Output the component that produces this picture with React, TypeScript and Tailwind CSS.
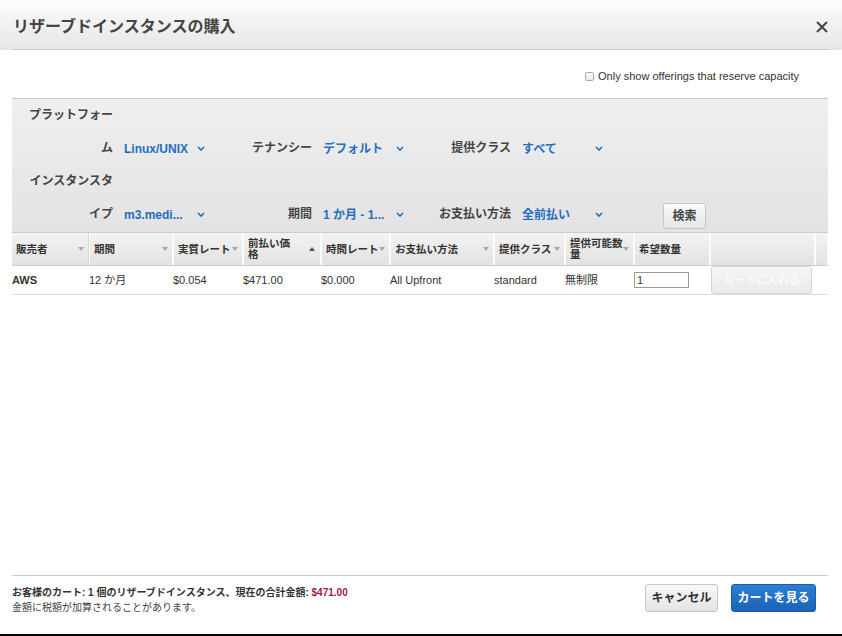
import React from "react";

function SortDown() {
  return (
    <svg width="6" height="4" viewBox="0 0 6 4" className="absolute right-[4px] top-1/2 -translate-y-1/2">
      <path d="M0 0 L6 0 L3 4 Z" fill="#a8a8a8" />
    </svg>
  );
}
function SortUp() {
  return (
    <svg width="6" height="4" viewBox="0 0 6 4" className="absolute right-[5px] top-1/2 -translate-y-1/2">
      <path d="M0 4 L6 4 L3 0 Z" fill="#555" />
    </svg>
  );
}
function Chevron() {
  return (
    <svg width="8" height="5" viewBox="0 0 8 5" className="shrink-0">
      <path d="M1 1 L4 4 L7 1" fill="none" stroke="#1e6ebf" strokeWidth="1.6" />
    </svg>
  );
}

function Filter({ label, value }: { label: React.ReactNode; value: string }) {
  return (
    <div className="flex items-end">
      <div className="w-[85px] text-right leading-[33px] font-bold text-[#444] text-[12px] whitespace-nowrap">{label}</div>
      <div className="ml-[11px] w-[81px] h-[33px] flex items-center justify-between">
        <span className="text-[12px] font-bold text-[#1e6ebf] whitespace-nowrap">{value}</span>
        <Chevron />
      </div>
    </div>
  );
}

const cols: { w: string; label: React.ReactNode; sort: string }[] = [
  { w: "w-[77px]", label: "販売者", sort: "down" },
  { w: "w-[84px]", label: "期間", sort: "down" },
  { w: "w-[70px]", label: "実質レート", sort: "down" },
  { w: "w-[78px]", label: <>前払い価<br />格</>, sort: "up" },
  { w: "w-[69px]", label: "時間レート", sort: "down" },
  { w: "w-[104px]", label: "お支払い方法", sort: "down" },
  { w: "w-[71px]", label: "提供クラス", sort: "down" },
  { w: "w-[69px]", label: <>提供可能数<br />量</>, sort: "down" },
  { w: "w-[76px]", label: "希望数量", sort: "none" },
  { w: "w-[105px]", label: "", sort: "none" },
  { w: "w-[13px]", label: "", sort: "none" },
];

export default function App() {
  return (
    <div className="w-[842px] h-[636px] bg-white flex flex-col border-b-2 border-black font-['Liberation_Sans','Noto_Sans_CJK_JP',sans-serif] text-[#333] overflow-hidden">
      {/* Header */}
      <div className="h-[50px] shrink-0 bg-gradient-to-b from-[#fcfcfc] to-[#e6e6e6]">
        <div className="ml-[12px] mr-[13px] h-full border-b border-[#c8c8c8] flex items-center justify-between pt-[5px]">
          <div className="text-[16px] font-bold text-[#444] leading-none pl-[1px]">リザーブドインスタンスの購入</div>
          <svg width="12" height="12" viewBox="0 0 12 12" className="mr-[1px]">
            <path d="M1 1 L11 11 M11 1 L1 11" stroke="#444" strokeWidth="2" />
          </svg>
        </div>
      </div>

      <div className="flex-1 flex flex-col mx-[12px] mr-[14px]">
        {/* checkbox row */}
        <div className="h-[48px] shrink-0 flex items-center justify-end pr-[29px] pt-[4px]">
          <span className="w-[9px] h-[9px] border border-[#aaa] rounded-[2px] bg-gradient-to-b from-white to-[#e8e8e8] mr-[4px]" />
          <span className="text-[11px] text-[#333] leading-none">Only show offerings that reserve capacity</span>
        </div>

        {/* filter panel */}
        <div className="h-[134px] shrink-0 border-t border-[#c8c8c8] bg-gradient-to-b from-[#efefef] to-[#e3e3e3] pl-[16px]">
          <div className="h-[66px] flex items-end gap-[22px]">
            <Filter label={<>プラットフォー<br />ム</>} value="Linux/UNIX" />
            <Filter label="テナンシー" value="デフォルト" />
            <Filter label="提供クラス" value="すべて" />
          </div>
          <div className="h-[66px] flex items-end gap-[22px]">
            <Filter label={<>インスタンスタ<br />イプ</>} value="m3.medi..." />
            <Filter label="期間" value="1 か月 - 1..." />
            <Filter label="お支払い方法" value="全前払い" />
            <button className="ml-[38px] mb-[2px] h-[26px] w-[43px] rounded-[3px] border border-[#c6c6c6] bg-gradient-to-b from-[#fafafa] to-[#e6e6e6] text-[12px] font-bold text-[#444] flex items-center justify-center">
              検索
            </button>
          </div>
        </div>

        {/* table header */}
        <div className="h-[34px] shrink-0 flex border-t border-b border-[#cccccc] bg-gradient-to-b from-[#f3f3f3] to-[#e2e2e2]">
          {cols.map((c, i) => (
            <div
              key={i}
              className={`${c.w} shrink-0 h-full relative flex items-center pl-[4px] ${i > 0 ? "border-l border-[#fbfbfb]" : ""} border-r border-[#d6d6d6]`}
            >
              <span className="text-[10.5px] font-bold text-[#333] leading-[11px] whitespace-nowrap">{c.label}</span>
              {c.sort === "down" && <SortDown />}
              {c.sort === "up" && <SortUp />}
            </div>
          ))}
        </div>

        {/* body row */}
        <div className="h-[29px] shrink-0 flex items-center border-b border-[#dddddd] text-[11px] text-[#333]">
          <div className="w-[77px] shrink-0 font-bold">AWS</div>
          <div className="w-[84px] shrink-0">12 か月</div>
          <div className="w-[70px] shrink-0">$0.054</div>
          <div className="w-[78px] shrink-0">$471.00</div>
          <div className="w-[69px] shrink-0">$0.000</div>
          <div className="w-[104px] shrink-0">All Upfront</div>
          <div className="w-[71px] shrink-0">standard</div>
          <div className="w-[69px] shrink-0">無制限</div>
          <div className="w-[77px] shrink-0">
            <div className="w-[55px] h-[16px] border border-[#9a9a9a] bg-white text-[11px] leading-[14px] pl-[2px]">1</div>
          </div>
          <div className="w-[101px] shrink-0 self-end h-[28px] rounded-[3px] border border-[#d6d6d6] bg-gradient-to-b from-[#f6f6f6] to-[#e9e9e9] flex items-center justify-center text-[11px] font-bold text-[#fbfbfb]">
            カートに入れる
          </div>
        </div>

        <div className="flex-1" />

        {/* footer */}
        <div className="h-[59px] shrink-0 border-t border-[#cccccc] flex justify-between pt-[9px]">
          <div className="text-[10px] leading-[15px]">
            <div className="font-bold text-[#333]">
              お客様のカート: 1 個のリザーブドインスタンス、現在の合計金額: <span className="text-[#a3174e]">$471.00</span>
            </div>
            <div className="text-[#444]">金額に税額が加算されることがあります。</div>
          </div>
          <div className="flex items-start gap-[13px] pr-[12px] -mt-[1px]">
            <button className="h-[28px] w-[73px] rounded-[3px] border border-[#c8c8c8] bg-gradient-to-b from-[#f8f8f8] to-[#e4e4e4] text-[12px] font-bold text-[#333] flex items-center justify-center">
              キャンセル
            </button>
            <button className="h-[28px] w-[85px] rounded-[3px] border border-[#1a5ea8] bg-gradient-to-b from-[#2b7fd4] to-[#1b63b5] text-[12px] font-bold text-white flex items-center justify-center">
              カートを見る
            </button>
          </div>
        </div>
      </div>
    </div>
  );
}
